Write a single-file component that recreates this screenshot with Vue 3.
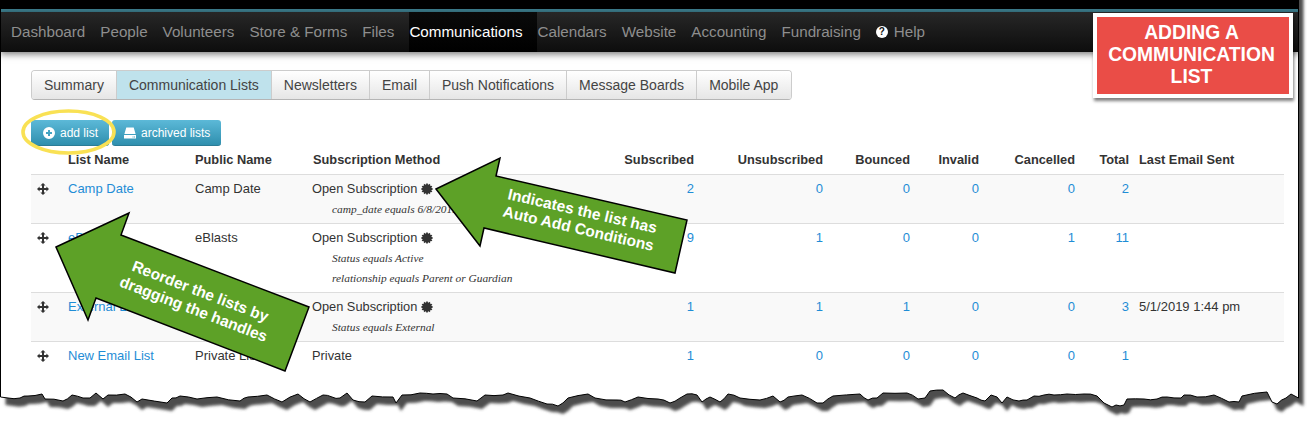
<template>
  <div class="page">
    <div class="window">
      <div class="topbar"></div>
      <nav class="nav">
        <a v-for="item in navItems" :key="item" class="nav-item" :class="{ active: item === 'Communications' }">{{ item }}</a>
        <a class="nav-item help"><span class="help-icon">?</span>Help</a>
      </nav>

      <div class="content">
        <div class="tabs">
          <a v-for="tab in tabs" :key="tab" class="tab" :class="{ active: tab === 'Communication Lists' }">{{ tab }}</a>
        </div>

        <div class="actions">
          <button class="btn add">
            <svg class="btn-icon" viewBox="0 0 12 12">
              <path fill="#fff" fill-rule="evenodd" d="M6 0a6 6 0 1 0 0 12A6 6 0 0 0 6 0zM5 3h2v2h2v2H7v2H5V7H3V5h2z" />
            </svg>
            add list
          </button>
          <button class="btn">
            <svg class="btn-icon" viewBox="0 0 12 12">
              <path fill="#fff" d="M2.3 .5h7.4L11.6 7H.4zM0 8h12v3.5H0zM8.6 9.4v1h.9v-1zM10 9.4v1h.9v-1z" fill-rule="evenodd" />
            </svg>
            archived lists
          </button>
        </div>

        <table class="lists">
          <colgroup>
            <col v-for="(w, i) in colWidths" :key="i" :style="{ width: w + 'px' }" />
          </colgroup>
          <thead>
            <tr>
              <th></th>
              <th>List Name</th>
              <th>Public Name</th>
              <th>Subscription Method</th>
              <th class="num">Subscribed</th>
              <th class="num">Unsubscribed</th>
              <th class="num">Bounced</th>
              <th class="num">Invalid</th>
              <th class="num">Cancelled</th>
              <th class="num">Total</th>
              <th>Last Email Sent</th>
            </tr>
          </thead>
          <tbody>
            <tr v-for="row in rows" :key="row.name">
              <td>
                <svg class="handle" viewBox="0 0 12 12">
                  <path fill="#333" d="M6 0l2.6 2.6H7V5h2.4V3.4L12 6 9.4 8.6V7H7v2.4h1.6L6 12 3.4 9.4H5V7H2.6v1.6L0 6l2.6-2.6V5H5V2.6H3.4z" />
                </svg>
              </td>
              <td><a class="link">{{ row.name }}</a></td>
              <td>{{ row.publicName }}</td>
              <td>
                <div class="method">
                  {{ row.method }}
                  <svg v-if="row.conditions.length" class="burst" viewBox="0 0 12 12">
                    <polygon fill="#333" :points="burstPoints" />
                  </svg>
                </div>
                <div v-for="c in row.conditions" :key="c" class="condition">{{ c }}</div>
              </td>
              <td v-for="(n, i) in row.counts" :key="i" class="num"><a class="link">{{ n }}</a></td>
              <td>{{ row.last }}</td>
            </tr>
          </tbody>
        </table>
      </div>
    </div>

    <svg class="overlay" width="1314" height="423" viewBox="0 0 1314 423">
      <defs>
        <filter id="soft" x="-5%" y="-5%" width="110%" height="110%">
          <feGaussianBlur stdDeviation="1.6" />
        </filter>
        <clipPath id="outside">
          <path clip-rule="evenodd" :d="'M-10 -10H1324V433H-10Z ' + windowPath" />
        </clipPath>
      </defs>
      <path fill="#fff" fill-rule="evenodd" :d="'M-10 -10H1324V433H-10Z ' + windowPath" />
      <g clip-path="url(#outside)">
        <path fill="#4d4d4d" :d="windowPath" transform="translate(5 8)" filter="url(#soft)" />
      </g>
      <path fill="none" stroke="#000" stroke-width="1" :d="windowPath" />

      <ellipse cx="68.5" cy="132" rx="45.5" ry="21" fill="none" stroke="#f9e154" stroke-width="3.6" />

      <polygon class="arrow" points="436,189 500,158 496,176 687,220 675,273 484,228 480,246" />
      <g class="arrow-text" transform="rotate(13 580 222)">
        <text x="580" y="216" text-anchor="middle">Indicates the list has</text>
        <text x="580" y="234" text-anchor="middle">Auto Add Conditions</text>
      </g>

      <polygon class="arrow" points="56,247 129,213 121,235 309,307 285,371 96,298 88,320" />
      <g class="arrow-text" transform="rotate(21 197 300)">
        <text x="197" y="296" text-anchor="middle">Reorder the lists by</text>
        <text x="197" y="315" text-anchor="middle">dragging the handles</text>
      </g>
    </svg>

    <div class="callout">ADDING A<br />COMMUNICATION<br />LIST</div>
  </div>
</template>

<script setup>
const navItems = ['Dashboard', 'People', 'Volunteers', 'Store & Forms', 'Files', 'Communications', 'Calendars', 'Website', 'Accounting', 'Fundraising'];
const tabs = ['Summary', 'Communication Lists', 'Newsletters', 'Email', 'Push Notifications', 'Message Boards', 'Mobile App'];

const colWidths = [32, 127, 118, 292, 99, 129, 87, 69, 96, 54, 150];

const rows = [
  { name: 'Camp Date', publicName: 'Camp Date', method: 'Open Subscription', conditions: ['camp_date equals 6/8/2019'], counts: [2, 0, 0, 0, 0, 2], last: '' },
  { name: 'eBlasts', publicName: 'eBlasts', method: 'Open Subscription', conditions: ['Status equals Active', 'relationship equals Parent or Guardian'], counts: [9, 1, 0, 0, 1, 11], last: '' },
  { name: 'External List', publicName: 'External List', method: 'Open Subscription', conditions: ['Status equals External'], counts: [1, 1, 1, 0, 0, 3], last: '5/1/2019 1:44 pm' },
  { name: 'New Email List', publicName: 'Private List', method: 'Private', conditions: [], counts: [1, 0, 0, 0, 0, 1], last: '' }
];

// 12 pointed burst for the "has conditions" marker
const burstPoints = Array.from({ length: 24 }, (_, i) => {
  const r = i % 2 ? 4.5 : 6.2;
  const a = (i * Math.PI) / 12;
  return `${(6 + r * Math.sin(a)).toFixed(2)},${(6 - r * Math.cos(a)).toFixed(2)}`;
}).join(' ');

// torn bottom edge of the screenshot, left to right
const tear = [
  [0.5, 397], [8, 398], [20, 398], [28, 396], [42, 394], [45, 399], [63, 401], [72, 395], [83, 398], [90, 398], [96, 393], [103, 399], [108, 395], [125, 394], [137, 402], [142, 399], [167, 403], [172, 398], [180, 396], [197, 399], [217, 397], [240, 401], [248, 397], [267, 395], [282, 402], [298, 394], [310, 402], [323, 395], [332, 397],
  [340, 398], [347, 393], [353, 400], [365, 402], [372, 396], [393, 397], [396, 403], [402, 395], [420, 393], [433, 394], [447, 394], [453, 398], [477, 401], [485, 395], [503, 395], [508, 393], [530, 398], [547, 404], [558, 406], [568, 398], [588, 394], [595, 398], [617, 400], [625, 402], [638, 397], [658, 399],
  [670, 403], [680, 398], [687, 394], [697, 395], [702, 402], [710, 397], [720, 402], [728, 394], [740, 398], [760, 400], [773, 396], [780, 402], [788, 397], [802, 395], [817, 403], [823, 403], [833, 396], [860, 394], [868, 400], [877, 398], [883, 393], [907, 393], [918, 399], [925, 398], [930, 391], [943, 390], [955, 398], [963, 393], [977, 398], [985, 401],
  [991, 395], [997, 397], [1002, 403], [1007, 397], [1019, 401], [1027, 400], [1034, 396], [1044, 395], [1054, 395], [1067, 394], [1084, 394], [1097, 396], [1104, 403], [1112, 407], [1116, 405], [1124, 405], [1127, 399], [1144, 399], [1157, 399], [1167, 397], [1181, 398], [1184, 395], [1197, 397], [1214, 395], [1229, 402], [1239, 402], [1242, 396], [1267, 392], [1272, 402], [1277, 404], [1286, 398], [1291, 394], [1298.5, 398]
];

// add a little jitter between the hand-read points so the edge isn't so straight
const roughTear = tear.flatMap((p, i) => {
  const next = tear[i + 1];
  if (!next || next[0] - p[0] < 8) return [p];
  const mx = (p[0] + next[0]) / 2;
  const my = (p[1] + next[1]) / 2 + Math.sin(i * 2.3) * 0.9;
  return [p, [mx, +my.toFixed(1)]];
});
const windowPath = 'M0.5 -20 L' + roughTear.map(p => p.join(' ')).join(' L') + ' L1298.5 -20 Z';
</script>

<style scoped>
.page { position: relative; width: 1314px; height: 423px; overflow: hidden; background: #fff; font-family: "Liberation Sans", Arial, sans-serif; }
.window { width: 1299px; height: 423px; }
.topbar { height: 9px; background: #000; border-bottom: 3px solid #3d7f8f; }
.nav { display: flex; height: 40px; padding-left: 11px; background: linear-gradient(#272727, #0d0d0d); box-shadow: 0 2px 7px rgba(0, 0, 0, .55); font-size: 15.2px; line-height: 40px; }
.nav-item { color: #8e8e8e; padding-right: 15px; white-space: nowrap; }
.nav-item.active { color: #fff; background: linear-gradient(#0a0a0a, #000); }
.help { display: flex; align-items: center; }
.help-icon { width: 12px; height: 12px; margin-right: 6px; border-radius: 50%; background: #fff; color: #111; font-size: 10px; font-weight: bold; line-height: 12px; text-align: center; }

.content { padding-left: 31px; }
.tabs { display: inline-flex; height: 30px; margin-top: 18px; border: 1px solid #ccc; border-bottom-color: #b5b5b5; border-radius: 4px; box-sizing: border-box; overflow: hidden; font-size: 14px; line-height: 29px; vertical-align: top; }
.tab { padding: 0 12px; color: #444; background: linear-gradient(#fff, #e6e6e6); border-right: 1px solid #ccc; white-space: nowrap; }
.tab:last-child { border-right: 0; padding-right: 13px; }
.tab.active { background: #bfe2ec; }

.actions { display: flex; gap: 3px; margin-top: 20px; }
.btn { display: flex; align-items: center; gap: 5px; height: 26px; padding: 0 11px 0 12px; border: 0; border-bottom: 1px solid #2b7c96; border-radius: 3px; background: linear-gradient(#5cb9d8, #2f8fae); color: #fff; font-family: inherit; font-size: 12px; white-space: nowrap; }
.btn.add { width: 78px; }
.btn-icon { width: 12px; height: 12px; flex: none; }

.lists { width: 1253px; margin-top: 4px; table-layout: fixed; border-collapse: collapse; font-size: 13px; line-height: 20px; color: #333; }
.lists th { height: 24px; padding: 0 5px 4px; box-sizing: border-box; text-align: left; font-size: 12.8px; font-weight: bold; white-space: nowrap; border-bottom: 1px solid #ddd; }
.lists td { padding: 4px 5px; vertical-align: top; border-top: 1px solid #ddd; white-space: nowrap; }
.lists tbody tr:nth-child(odd) { background: #f9f9f9; }
.lists .num { text-align: right; }
.link { color: #1f8dd6; }
.handle { display: block; width: 12px; height: 12px; margin: 4px 0 0 1px; }
.method { display: flex; align-items: center; gap: 4px; margin-left: -1px; font-size: 12.8px; }
.burst { width: 12px; height: 12px; }
.condition { padding-left: 19px; font-family: "Liberation Serif", serif; font-style: italic; font-size: 11.4px; }

.overlay { position: absolute; top: 0; left: 0; pointer-events: none; }
.arrow { fill: #5da127; stroke: #000; stroke-width: 1.5; }
.arrow-text { fill: #fff; font-size: 15.5px; font-weight: bold; }

.callout { position: absolute; top: 13px; left: 1093px; width: 200px; height: 85px; box-sizing: border-box; padding: 5px 3px 0 0; border: 4px solid #fff; background: #ea4d47; background-clip: padding-box; box-shadow: 1px 3px 3px rgba(0, 0, 0, .5); color: #fff; font-size: 19.3px; font-weight: bold; line-height: 22px; text-align: center; }
</style>
